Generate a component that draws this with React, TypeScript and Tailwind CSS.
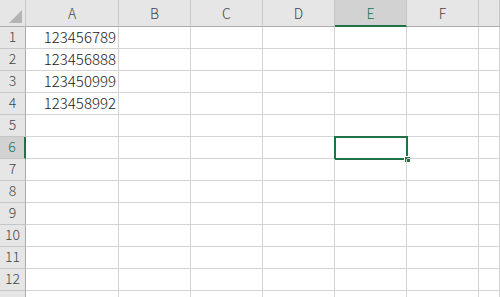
const cols = ['A', 'B', 'C', 'D', 'E', 'F', ''];
const values = ['123456789', '123456888', '123450999', '123458992'];
const rows = Array.from({ length: 13 }, (_, i) => i + 1);

const font = { fontFamily: '"Noto Sans CJK TC", "Microsoft JhengHei", sans-serif' };

export default function App() {
  return (
    <div
      className="h-[297px] w-[500px] overflow-hidden bg-white text-[14px] font-light text-[#222]"
      style={font}
    >
      <div className="grid grid-cols-[26px_93px_72px_72px_72px_72px_72px_1fr] grid-rows-[27px_repeat(13,22px)]">
        {/* corner */}
        <div className="relative border-b border-r border-b-[#ababab] border-r-[#c6c6c6] bg-[#e6e6e6]">
          <svg className="absolute left-0 top-0" width="25" height="26" viewBox="0 0 25 26">
            <polygon points="9,23 22,23 22,10" fill="#b4b4b4" />
          </svg>
        </div>
        {cols.map((c, i) =>
          c === 'E' ? (
            <div
              key={i}
              className="flex items-center justify-center border-b-2 border-r border-b-[#217346] border-r-[#c6c6c6] bg-[#d2d2d2] pt-[2px] text-[#217346]"
            >
              {c}
            </div>
          ) : (
            <div
              key={i}
              className="flex items-center justify-center border-b border-r border-b-[#ababab] border-r-[#c6c6c6] bg-[#e6e6e6] pt-[1px] text-[#444]"
            >
              {c}
            </div>
          ),
        )}

        {rows.map((r) => (
          <Row key={r} r={r} />
        ))}
      </div>
    </div>
  );
}

function Row({ r }: { r: number }) {
  const selected = r === 6;
  return (
    <>
      <div
        className={`flex items-end justify-center border-b pb-[1px] ${
          selected
            ? 'border-r-2 border-b-[#c6c6c6] border-r-[#217346] bg-[#d2d2d2] text-[#217346]'
            : 'border-r border-b-[#c6c6c6] border-r-[#ababab] bg-[#e6e6e6] text-[#444]'
        }`}
      >
        {r < 13 ? r : ''}
      </div>
      {cols.map((c, i) => (
        <div
          key={i}
          className="relative flex items-end justify-end border-b border-r border-[#d4d4d4] pb-[1px] pr-[2px] text-[15px] leading-[20px]"
        >
          {c === 'A' && values[r - 1]}
          {c === 'E' && selected && (
            <div className="absolute -left-[1px] -top-[1px] h-[24px] w-[74px] border-2 border-[#217346]">
              <div className="absolute -bottom-[5px] -right-[5px] h-[7px] w-[7px] border border-white bg-[#217346]" />
            </div>
          )}
        </div>
      ))}
    </>
  );
}
